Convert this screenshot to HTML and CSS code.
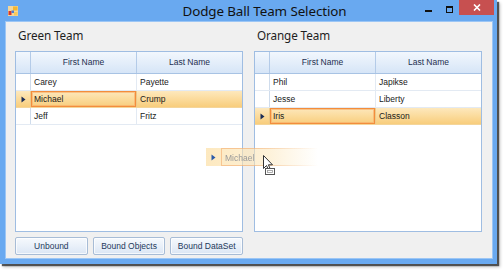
FILE: index.html
```html
<!DOCTYPE html>
<html>
<head>
<meta charset="utf-8">
<link rel="stylesheet" href="styles.css">
</head>
<body>
<div class="window">
  <div class="titlebar">
    <svg class="app-icon" width="10" height="10" viewBox="0 0 10 10">
      <rect x="0" y="0" width="10" height="10" fill="#f3d69a"/>
      <rect x="5" y="0.5" width="4.5" height="4" fill="#f2b632"/>
      <rect x="0.5" y="5" width="3" height="4" fill="#d8372b"/>
      <rect x="3.5" y="4.5" width="2.5" height="2.5" fill="#4a7fd0"/>
      <rect x="6" y="6" width="3.5" height="3.5" fill="#f7c95a"/>
    </svg>
    <div class="title">Dodge Ball Team Selection</div>
    <div class="controls">
      <span class="ctl-min"></span>
      <span class="ctl-max"></span>
      <span class="ctl-close">
        <svg width="8" height="7" viewBox="0 0 8 7"><path d="M1 0.5 L7 6.5 M7 0.5 L1 6.5" stroke="#fff" stroke-width="1.6"/></svg>
      </span>
    </div>
  </div>
  <div class="client">
    <div class="teams">
      <section class="team">
        <div class="team-label">Green Team</div>
        <div class="grid">
          <div class="row head">
            <div class="rh"></div>
            <div class="cell">First Name</div>
            <div class="cell">Last Name</div>
          </div>
          <div class="row">
            <div class="rh"></div>
            <div class="cell">Carey</div>
            <div class="cell">Payette</div>
          </div>
          <div class="row selected">
            <div class="rh"><svg class="arrow" width="5" height="7" viewBox="0 0 5 7"><path d="M0.5 0.5 L4.5 3.5 L0.5 6.5 Z" fill="#1b2c56"/></svg></div>
            <div class="cell current">Michael</div>
            <div class="cell">Crump</div>
          </div>
          <div class="row">
            <div class="rh"></div>
            <div class="cell">Jeff</div>
            <div class="cell">Fritz</div>
          </div>
        </div>
        <div class="buttons">
          <button class="btn">Unbound</button>
          <button class="btn">Bound Objects</button>
          <button class="btn">Bound DataSet</button>
        </div>
      </section>
      <section class="team">
        <div class="team-label">Orange Team</div>
        <div class="grid">
          <div class="row head">
            <div class="rh"></div>
            <div class="cell">First Name</div>
            <div class="cell">Last Name</div>
          </div>
          <div class="row">
            <div class="rh"></div>
            <div class="cell">Phil</div>
            <div class="cell">Japikse</div>
          </div>
          <div class="row">
            <div class="rh"></div>
            <div class="cell">Jesse</div>
            <div class="cell">Liberty</div>
          </div>
          <div class="row selected">
            <div class="rh"><svg class="arrow" width="5" height="7" viewBox="0 0 5 7"><path d="M0.5 0.5 L4.5 3.5 L0.5 6.5 Z" fill="#1b2c56"/></svg></div>
            <div class="cell current">Iris</div>
            <div class="cell">Classon</div>
          </div>
        </div>
      </section>
    </div>
  </div>
  <div class="drag-ghost">
    <div class="ghost-rh"><svg width="5" height="7" viewBox="0 0 5 7"><path d="M0.5 0.5 L4.5 3.5 L0.5 6.5 Z" fill="#2a5aa8"/></svg></div>
    <div class="ghost-cell">Michael</div>
  </div>
  <svg class="cursor" width="14" height="21" viewBox="0 0 14 21">
    <path d="M0.5 0.5 L0.5 13.5 L3.5 10.5 L5.8 15.5 L7.6 14.7 L5.4 9.8 L9.5 9.8 Z" fill="#fff" stroke="#333" stroke-width="1"/>
    <rect x="2.5" y="13.5" width="9" height="6" fill="#fff" stroke="#555" stroke-width="1"/>
    <rect x="4.5" y="15.5" width="5" height="2" fill="none" stroke="#999" stroke-width="0.8"/>
  </svg>
</div>
</body>
</html>
```
FILE: styles.css
```css
html, body {
  margin: 0;
  padding: 0;
  background: #ffffff;
}
body {
  width: 503px;
  height: 270px;
  overflow: hidden;
  font-family: "Liberation Sans", Arial, sans-serif;
}
.window {
  position: relative;
  width: 497px;
  height: 264px;
  background: #69a9f0;
  box-shadow: 2px 2px 1px rgba(40, 40, 40, 0.75), 3px 3px 3px rgba(0, 0, 0, 0.25);
  display: flex;
  flex-direction: column;
}
.titlebar {
  height: 22px;
  display: flex;
  align-items: flex-start;
  position: relative;
}
.app-icon {
  margin: 6px 0 0 8px;
}
.title {
  position: absolute;
  left: 32px;
  right: 0;
  top: 2px;
  text-align: center;
  font-family: "Noto Sans", "Open Sans", sans-serif;
  font-size: 13.4px;
  color: #111;
  letter-spacing: -0.1px;
  pointer-events: none;
}
.controls {
  margin-left: auto;
  margin-right: 3px;
  display: flex;
  align-items: flex-start;
  height: 15px;
}
.ctl-min {
  width: 7px;
  height: 2px;
  background: #111;
  margin: 10px 14px 0 0;
}
.ctl-max {
  width: 5px;
  height: 4px;
  border: 1px solid #111;
  border-top-width: 2px;
  margin: 6px 6px 0 0;
}
.ctl-close {
  width: 35px;
  height: 15px;
  background: #c75050;
  display: flex;
  align-items: center;
  justify-content: center;
}
.client {
  margin: 0 5px 0 6px;
  height: 236px;
  background: #f0f0f0;
  box-shadow: 0 0 0 1px #9cc6f5;
}
.teams {
  display: grid;
  grid-template-columns: 228px 228px;
  column-gap: 11px;
  padding: 0 0 0 9px;
}
.team-label {
  height: 29px;
  box-sizing: border-box;
  padding: 5px 0 0 3px;
  font-family: "Noto Sans", "Open Sans", sans-serif;
  font-size: 11.7px;
  color: #1e1e1e;
  letter-spacing: -0.1px;
}
.grid {
  height: 181px;
  box-sizing: border-box;
  border: 1px solid #9fbde2;
  background: #ffffff;
}
.row {
  display: grid;
  grid-template-columns: 15px 106px 1fr;
  height: 17px;
  border-bottom: 1px solid #e3eaf3;
  box-sizing: border-box;
  font-size: 8.5px;
  color: #1a1a1a;
}
.row .rh {
  border-right: 1px solid #cfdcec;
  display: flex;
  align-items: center;
  justify-content: center;
}
.row .cell {
  padding-left: 3px;
  line-height: 16px;
  border-right: 1px solid #e3eaf3;
  white-space: nowrap;
  overflow: hidden;
}
.row .cell:last-child {
  border-right: none;
}
.row.head {
  height: 22px;
  border-bottom: 1px solid #a8c3e4;
  background: linear-gradient(#f2f7fd 0%, #e4eefa 50%, #d6e5f7 100%);
  color: #1e2f4f;
}
.row.head .rh {
  border-right: 1px solid #b4cbe8;
}
.row.head .cell {
  text-align: center;
  padding-left: 0;
  line-height: 21px;
  border-right: 1px solid #b4cbe8;
}
.row.head .cell:last-child {
  border-right: none;
}
.row.selected {
  background: linear-gradient(#fde8bd 0%, #fbdb9c 50%, #f8cd7c 100%);
  border-bottom-color: #f4d59a;
}
.row.selected .rh {
  border-right-color: #ecc98a;
}
.row.selected .cell {
  border-right-color: #ecc98a;
}
.row .cell.current {
  box-shadow: inset 0 0 0 1px #f38d3c, inset 0 0 0 2px rgba(248, 170, 100, 0.6);
}
.buttons {
  display: flex;
  gap: 5px;
  margin-top: 5px;
}
.btn {
  width: 73px;
  height: 18px;
  padding: 0;
  border: 1px solid #a7bcd6;
  border-radius: 2px;
  background: linear-gradient(#f6f9fd 0%, #e9f0f9 50%, #dbe6f4 100%);
  box-shadow: inset 0 0 0 1px rgba(255, 255, 255, 0.7);
  font-family: "Liberation Sans", Arial, sans-serif;
  font-size: 8.5px;
  color: #1e395b;
}
.drag-ghost {
  position: absolute;
  left: 206px;
  top: 148px;
  width: 112px;
  height: 18px;
  display: flex;
  background: linear-gradient(90deg, rgba(252, 225, 170, 0.75) 0%, rgba(252, 230, 185, 0.55) 55%, rgba(255, 240, 215, 0) 100%);
}
.ghost-rh {
  width: 15px;
  display: flex;
  align-items: center;
  justify-content: center;
}
.ghost-cell {
  flex: 1;
  padding-left: 3px;
  line-height: 18px;
  font-size: 8.5px;
  color: #9a9a9a;
  box-sizing: border-box;
  border: 1px solid rgba(240, 150, 80, 0.45);
  border-right: none;
  -webkit-mask-image: linear-gradient(90deg, #000 30%, transparent 100%);
}
.cursor {
  position: absolute;
  left: 263px;
  top: 155px;
}
```
